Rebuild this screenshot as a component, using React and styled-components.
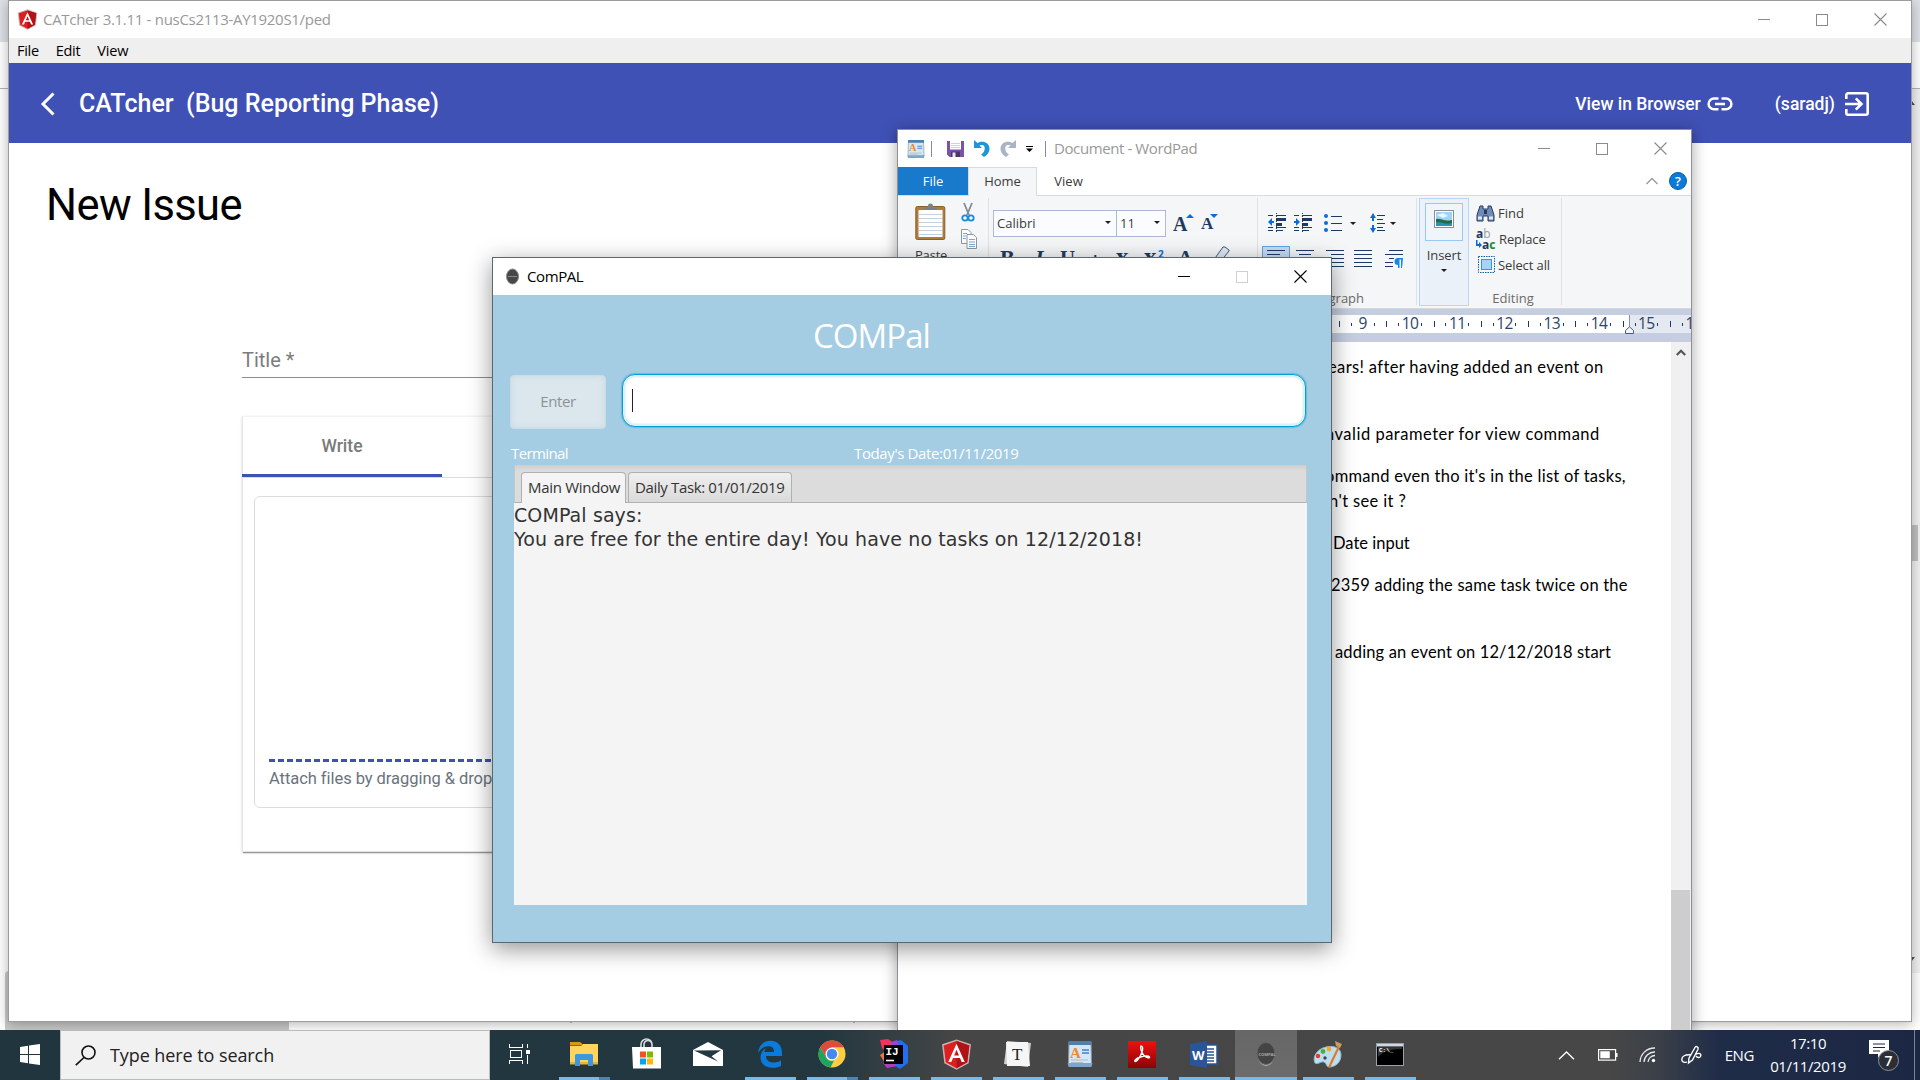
import React from "react";
import styled, { createGlobalStyle, css } from "styled-components";

const UI = `"Open Sans", "Noto Sans", sans-serif`;
const ROBOTO = `Roboto, "Open Sans", sans-serif`;

const GlobalStyle = createGlobalStyle`
  * { box-sizing: border-box; }
  html, body { margin: 0; padding: 0; overflow: hidden; }
  body { font-family: ${UI}; }
  svg { display: block; flex: none; overflow: visible; }
`;

/* ---------- shared ---------- */

const Desktop = styled.main`
  position: relative;
  width: 1920px;
  height: 1080px;
  overflow: hidden;
  background: #fdfdfd;
`;

const Label = styled.span`
  display: block;
  white-space: pre;
  font-family: ${(p) => p.$font || UI};
  font-size: ${(p) => p.$size || 15}px;
  line-height: ${(p) => p.$line || 20}px;
  font-weight: ${(p) => p.$weight || 400};
  letter-spacing: ${(p) => p.$track || 0}px;
  color: ${(p) => p.$color || "#000"};
`;

const Spacer = styled.div`
  flex: 1;
`;

const WindowFrame = styled.section`
  position: absolute;
  display: flex;
  flex-direction: column;
  background: #fff;
`;

const Caption = styled.header`
  display: flex;
  align-items: center;
  height: 37px;
  flex: none;
  background: #fff;
`;

const CaptionText = styled(Label)`
  padding-bottom: 2px;
`;

const CaptionButtons = styled.div`
  display: flex;
  align-items: center;
  gap: 46px;
  color: ${(p) => p.$color};
  padding-right: ${(p) => p.$right}px;
`;

const WindowButtons = ({ color, maxColor, right }) => (
  <CaptionButtons $color={color} $right={right}>
    <svg width="12" height="12" shapeRendering="crispEdges"><path d="M0 5.5H12" stroke="currentColor" /></svg>
    <svg width="12" height="12" shapeRendering="crispEdges"><rect x=".5" y=".5" width="11" height="11" fill="none" stroke={maxColor || color} /></svg>
    <svg width="13" height="13"><path d="M.5 .5L12.5 12.5M12.5 .5L.5 12.5" stroke="currentColor" strokeWidth="1.1" /></svg>
  </CaptionButtons>
);

/* ---------- browser window at the back ---------- */

const BackWindow = styled.div`
  display: flex;
  flex-direction: column;
  height: 1030px;
`;
const BackTabs = styled.div`
  height: 42px;
  background: #dee1e6;
`;
const BackBar = styled.div`
  height: 47px;
  background: #fff;
  border-bottom: 1px solid #b4b4b4;
`;
const BackBody = styled.div`
  display: flex;
  flex: 1;
  justify-content: flex-end;
  background: #fff;
`;
const BackScroll = styled.div`
  display: flex;
  flex-direction: column;
  align-items: flex-end;
  justify-content: space-between;
  width: 20px;
  height: 884px;
  padding: 11px 5px 11px 0;
  background: #f1f1f1;
`;
const BackThumb = styled.div`
  width: 17px;
  height: 36px;
  margin: 420px -3px auto;
  background: #c1c1c1;
`;
const BackDock = styled.div`
  display: flex;
  height: 59px;
  padding-left: 5px;
  margin-top: -59px;
`;
const BackPanel = styled.div`
  width: 284px;
  border-top-left-radius: 4px;
  background: #c9c9c9;
`;
const BackTicks = styled.div`
  width: 283px;
  border-right: 2px solid #c0c0c0;
  height: 52px;
`;

/* ---------- CATcher ---------- */

const CatcherFrame = styled(WindowFrame)`
  left: 8px;
  top: 0;
  width: 1904px;
  height: 1022px;
  border: 1px solid #9c9c9c;
  box-shadow: 0 2px 12px rgba(0, 0, 0, 0.3);
`;
const CatcherCaption = styled(Caption)`
  padding-left: 8px;
  gap: 5px;
`;
const MenuBar = styled.nav`
  display: flex;
  gap: 17px;
  height: 25px;
  padding: 3px 0 0 8px;
  background: #efefef;
`;
const Toolbar = styled.div`
  display: flex;
  align-items: center;
  height: 80px;
  padding: 2px 42px 0 31px;
  background: #3f51b5;
`;
const Page = styled.div`
  padding: 35px 0 0 37px;
`;
const Form = styled.div`
  width: 1400px;
  margin: 107px 0 0 196px;
`;
const TitleField = styled.div`
  display: flex;
  height: 37px;
  padding-top: 7px;
  border-bottom: 1px solid #8d8d8d;
`;
const EditorCard = styled.div`
  height: 436px;
  margin-top: 38px;
  border: 1px solid #e4e4e4;
  border-top-color: #f3f3f3;
  box-shadow: 0 2px 1px -1px rgba(0, 0, 0, 0.35), 0 1px 3px rgba(0, 0, 0, 0.14);
`;
const TabHeader = styled.div`
  display: flex;
  height: 61px;
  margin-left: -1px;
  border-bottom: 1px solid #dcdcdc;
`;
const EditorTab = styled.div`
  display: flex;
  align-items: center;
  justify-content: center;
  width: 200px;
  height: 60px;
  padding-top: 1px;
  border-bottom: 3px solid #3f51b5;
`;
const EditorBox = styled.div`
  display: flex;
  flex-direction: column;
  height: 312px;
  margin: 18px 11px 0;
  padding: 262px 14px 0;
  border: 1px solid #dcdcdc;
  border-radius: 6px;
`;
const DashLine = styled.div`
  height: 3px;
  margin-bottom: 7px;
  background: repeating-linear-gradient(90deg, #3f51b5 0 6px, transparent 6px 9px);
`;
const CatcherTitle = styled(Label)`
  margin-left: 23px;
`;
const LinkIcon = styled.svg`
  margin: 0 42px 0 6px;
`;
const ExitIcon = styled.svg`
  margin-left: 10px;
`;

const AngularShield = ({ w = 21, h = 21 }) => (
  <svg width={w} height={h} viewBox="0 0 30 30">
    <path d="M15 .5L29 5.2 26.8 23.5 15 29.8 3.2 23.5 1 5.2Z" fill="#c9b0b0" />
    <path d="M15 2L27.4 6.2 25.4 22.6 15 28.3 4.6 22.6 2.6 6.2Z" fill="#dd1f1f" />
    <path d="M15 2L27.4 6.2 25.4 22.6 15 28.3Z" fill="#b01217" />
    <path d="M15 4.5L7 22.3h3l1.6-4h6.8l1.6 4h3ZM15 10.3l2.4 5.6h-4.8Z" fill="#fff" fillRule="evenodd" />
  </svg>
);

const Catcher = () => (
  <CatcherFrame>
    <CatcherCaption>
      <AngularShield />
      <CaptionText $size={15} $track={-0.3} $color="#999">CATcher 3.1.11 - nusCs2113-AY1920S1/ped</CaptionText>
      <Spacer />
      <WindowButtons color="#8a8a8a" right={24} />
    </CatcherCaption>
    <MenuBar>
      <Label $size={14.5} $track={-0.3}>File</Label>
      <Label $size={14.5} $track={-0.3}>Edit</Label>
      <Label $size={14.5} $track={-0.2}>View</Label>
    </MenuBar>
    <Toolbar>
      <svg width="16" height="24"><path d="M13.5 1.5L3 12l10.500 10.500" fill="none" stroke="#fff" strokeWidth="3" /></svg>
      <CatcherTitle $font={ROBOTO} $size={25} $line={32} $weight={500} $color="#fff">{"CATcher  (Bug Reporting Phase)"}</CatcherTitle>
      <Spacer />
      <Label $font={ROBOTO} $size={17.5} $weight={500} $color="#fff">View in Browser</Label>
      <LinkIcon width="26" height="14" viewBox="0 0 26 14">
        <path d="M11.500 1.500H7a5.300 5.300 0 0 0 0 10.800h4.500M14.500 1.500H19a5.300 5.300 0 0 1 0 10.800h-4.500M8 7h10" fill="none" stroke="#fff" strokeWidth="2.500" />
      </LinkIcon>
      <Label $font={ROBOTO} $size={17.5} $weight={500} $color="#fff">(saradj)</Label>
      <ExitIcon width="24" height="24" viewBox="0 0 24 24">
        <path d="M1.300 7V3a1.700 1.700 0 0 1 1.700-1.700h18A1.700 1.700 0 0 1 22.700 3v18a1.700 1.700 0 0 1-1.700 1.700H3A1.700 1.700 0 0 1 1.300 21v-4M0 12h16M10.800 6.300L16.500 12l-5.700 5.700" fill="none" stroke="#fff" strokeWidth="2.600" />
      </ExitIcon>
    </Toolbar>
    <Page>
      <Label $font={ROBOTO} $size={43.5} $line={56} $track={-0.6}>New Issue</Label>
      <Form>
        <TitleField><Label $font={ROBOTO} $size={20} $line={24} $color="#7c7c7c">Title *</Label></TitleField>
        <EditorCard>
          <TabHeader>
            <EditorTab><Label $font={ROBOTO} $size={17.5} $weight={500} $color="#7a7a7a">Write</Label></EditorTab>
          </TabHeader>
          <EditorBox>
            <DashLine />
            <Label $font={ROBOTO} $size={16.5} $track={-0.05} $color="#6a737d">Attach files by dragging &amp; dropping or selecting them.</Label>
          </EditorBox>
        </EditorCard>
      </Form>
    </Page>
  </CatcherFrame>
);

/* ---------- WordPad ---------- */

const WordPadFrame = styled(WindowFrame)`
  left: 897px;
  top: 129px;
  width: 795px;
  height: 920px;
  border: 1px solid #8f8f97;
  box-shadow: 0 2px 14px rgba(0, 0, 0, 0.36);
`;
const QuickAccess = styled.div`
  display: flex;
  align-items: center;
  padding-left: 9px;
`;
const QuickSep = styled.div`
  width: 1px;
  height: 16px;
  margin: 0 ${(p) => p.$right}px 0 ${(p) => p.$left}px;
  background: #8c8c8c;
`;
const Gap = styled.div`
  width: ${(p) => p.$w}px;
  flex: none;
`;
const RibbonTabs = styled.div`
  display: flex;
  align-items: stretch;
  height: 29px;
  padding-right: 4px;
  border-bottom: 1px solid #d9dbdd;
`;
const RibbonTab = styled.div`
  display: flex;
  justify-content: center;
  width: ${(p) => p.$w}px;
  padding-top: 4px;
  ${(p) => p.$kind === "file" && css`background: #1979ca;`}
  ${(p) => p.$kind === "active" && css`
    height: 29px;
    background: #f5f6f7;
    border: 1px solid #dadbdc;
    border-bottom: 0;
    padding-top: 3px;
  `}
`;
const RibbonRight = styled.div`
  display: flex;
  align-items: center;
  gap: 11px;
  margin-left: auto;
`;
const Help = styled.div`
  display: flex;
  justify-content: center;
  width: 18px;
  height: 18px;
  border-radius: 50%;
  border: 1px solid #0a5ea6;
  background: #0b7ad8;
`;
const Ribbon = styled.div`
  display: flex;
  height: 113px;
  flex: none;
  padding: 2px 0 0;
  background: #f5f6f7;
  border-bottom: 1px solid #d5d8db;
`;
const Group = styled.div`
  display: flex;
  width: ${(p) => p.$w}px;
  height: 107px;
  border-right: 1px solid #e0e1e3;
`;
const Stack = styled.div`
  display: flex;
  flex-direction: column;
  padding: ${(p) => p.$pad || "0"};
`;
const Row = styled.div`
  display: flex;
  align-items: ${(p) => p.$align || "center"};
  height: ${(p) => p.$h}px;
  padding-left: ${(p) => p.$left || 0}px;
`;
const PasteLabel = styled(Label)`
  margin-top: 4px;
`;
const Combo = styled.div`
  display: flex;
  align-items: center;
  justify-content: space-between;
  width: ${(p) => p.$w}px;
  height: 27px;
  margin-right: -1px;
  padding: 0 5px 2px 3px;
  border: 1px solid #abbad0;
  background: #fafcff;
`;
const Serif = styled.span`
  font: bold ${(p) => p.$size}px/1 "Liberation Serif", serif;
  width: ${(p) => p.$w}px;
  font-style: ${(p) => (p.$italic ? "italic" : "normal")};
  text-decoration: ${(p) => (p.$under ? "underline" : "none")};
  color: #1e3a63;
  flex: none;
`;
const Struck = styled.span`
  width: 30px;
  margin-left: -4px;
  font: bold 13px/18px "Open Sans", sans-serif;
  letter-spacing: -0.5px;
  text-decoration: line-through;
  color: #1e3a63;
`;
const Selected = styled.div`
  display: flex;
  justify-content: center;
  width: 28px;
  height: 26px;
  padding-top: 3px;
  margin-right: 6px;
  border: 1px solid #62a2e4;
  background: #c6dcf2;
`;
const InsertButton = styled.div`
  display: flex;
  flex-direction: column;
  align-items: center;
  width: 50px;
  height: 108px;
  margin-left: 2px;
  padding-top: 4px;
  border: 1px solid #b9d7f5;
  background: #eaf1f8;
`;
const InsertPicture = styled.div`
  display: flex;
  align-items: center;
  justify-content: center;
  width: 38px;
  height: 38px;
  margin-bottom: 3px;
  padding-bottom: 6px;
  border: 1px solid #99c8f5;
  background: #f0f5fa;
`;
const EditCommand = styled.div`
  display: flex;
  align-items: center;
  gap: 3px;
  height: 26px;
`;
const GroupLabel = styled(Label)`
  margin: auto 0 -3px;
  text-align: center;
`;
const RulerBand = styled.div`
  display: flex;
  height: 33px;
  flex: none;
  padding: 6px 0 9px;
  background: #c4cee0;
`;
const RulerScale = styled.div`
  display: flex;
  flex: none;
  width: 793px;
  height: 18px;
  padding-left: 15.500px;
  overflow: hidden;
  background: linear-gradient(90deg, #fff 0 731px, #8293ad 731px 732px, #e4e8f0 732px);
`;
const RulerCell = styled.div`
  display: grid;
  grid-template-columns: 11.8px 1px 21.700px 1px 11.8px;
  align-items: center;
  flex: none;
`;
const Tick = styled.i`
  width: 1px;
  height: ${(p) => p.$h}px;
  background: #1e3a63;
`;
const RulerNumber = styled(Label)`
  display: flex;
  justify-content: center;
  margin-top: -2px;
`;
const Marker = styled.svg`
  position: relative;
  left: -66px;
  top: 11px;
`;
const DocRow = styled.div`
  display: flex;
  flex: 1;
  min-height: 0;
`;
const DocPage = styled.div`
  flex: 1;
  padding: 13px 0 0;
`;
const Paragraph = styled.div`
  margin-bottom: 17px;
  min-height: ${(p) => p.$lines * 25}px;
`;
const DocLine = styled(Label)`
  padding-left: ${(p) => p.$left}px;
`;
const DocScroll = styled.div`
  display: flex;
  flex-direction: column;
  align-items: center;
  width: 20px;
  padding-top: 7px;
  background: #f0f0f0;
`;
const DocThumb = styled.div`
  width: 19px;
  height: 200px;
  margin-top: 534px;
  margin-right: 1px;
  background: #cdcdcd;
`;

const Caret = ({ w = 6, h = 3 }) => (
  <svg width={w} height={h}><path d={`M0 0H${w}L${w / 2} ${h}Z`} fill="#1e1e1e" /></svg>
);
const Lines = ({ rows, w = 18 }) => (
  <svg width={w} height={rows.length * 4} shapeRendering="crispEdges">
    {rows.map(([a, b], i) => <path key={i} d={`M${a} ${i * 4 + 0.5}H${b}`} stroke="#1e3a63" strokeWidth="1" />)}
  </svg>
);
const IndentIcon = ({ flip }) => (
  <svg width="19" height="20" viewBox="0 0 19 20">
    <g stroke="#1e3a63" strokeWidth="1" shapeRendering="crispEdges">
      <path d="M1 2.500h5M9 2.500h10M1 14.500h5M9 14.500h10M1 17.500h5M9 17.500h7" />
      <path d="M9.500 0v20" strokeDasharray="1 1.500" />
    </g>
    <path d="M9 5h10v3H9zM9 10h6v3H9z" fill="#1e3a63" />
    <path d={flip ? "M1 8h2V5l4 4-4 4v-3H1z" : "M7 8H5V5L1 9l4 4v-3h2z"} fill="#0a6cd8" />
  </svg>
);
const WordPadIcon = ({ w, h }) => (
  <svg width={w} height={h} viewBox="0 0 26 28">
    <path d="M2 2h22l.5 22H1.500z" fill="#d5e6f5" stroke="#7c9cbc" />
    <path d="M1.500 1h23v4h-23z" fill="#4f7fab" />
    <path d="M.5 23h25l-1 4h-23z" fill="#7fa5c8" />
    <path d="M15 10h7M15 13h7" stroke="#4a7fc0" strokeWidth="1.300" />
    <path d="M4 20h17M4 22.500h12" stroke="#a9bccd" strokeWidth="1.200" />
    <text x="3" y="17.500" fontFamily="Liberation Serif, serif" fontWeight="bold" fontSize="15" fill="#f08a2c">A</text>
  </svg>
);

const paragraphs = [
  { lines: 2, text: [["ears! after having added an event on", 430, 0.36]] },
  { lines: 1, text: [["nvalid parameter for view command", 427, 0.5]] },
  { lines: 2, text: [["ommand even tho it's in the list of tasks,", 427, 0.27], ["n't see it ?", 431, 0.36]] },
  { lines: 1, text: [["Date input", 435, 0]] },
  { lines: 2, text: [["2359 adding the same task twice on the", 433, 0.2]] },
  { lines: 1, text: [["adding an event on 12/12/2018 start", 437, 0.15]] },
];

const DARK = "#3b3b3b";

const WordPad = () => (
  <WordPadFrame>
    <Caption>
      <QuickAccess>
        <WordPadIcon w={18} h={20} />
        <QuickSep $left={6} $right={15} />
        <svg width="17" height="16" viewBox="0 0 17 16">
          <path d="M0 0h17v16H2.500L0 13.500z" fill="#7a53a8" />
          <path d="M3 0h11v8.500H3z" fill="#fff" />
          <path d="M4 2.500h9M4 4.500h9M4 6.500h9" stroke="#d4cfde" />
          <path d="M4 10.500h9V16H4z" fill="#4a3768" /><path d="M5.500 11.500h3V16h-3z" fill="#e8e4f0" />
        </svg>
        <Gap $w={10} />
        <svg width="16" height="17" viewBox="0 0 16 17"><path d="M0 0v8h8L5.500 5.500C9 4 11.500 6 10.500 10c-.5 2-2 3.500-3.500 4.500L10 17c3-2 5.500-4.500 5.500-8.500C15.500 2 8 0 3.500 3z" fill="#1b96dc" /></svg>
        <Gap $w={10} />
        <svg width="16" height="17" viewBox="0 0 16 17"><path d="M16 0v8H8l2.500-2.500C7 4 4.500 6 5.500 10c.5 2 2 3.500 3.500 4.500L6 17C3 15 .5 12.500.5 8.500.5 2 8 0 12.500 3z" fill="#a9b4c6" /></svg>
        <Gap $w={10} />
        <svg width="7" height="6"><path d="M0 .5h7" stroke="#000" /><path d="M0 2.500h7L3.500 6z" /></svg>
        <QuickSep $left={12} $right={8} />
        <CaptionText $size={15} $color="#999" $track={-0.4}>Document - WordPad</CaptionText>
      </QuickAccess>
      <Spacer />
      <WindowButtons color="#8a8a8a" right={24} />
    </Caption>
    <RibbonTabs>
      <RibbonTab $w={70} $kind="file"><Label $size={13} $color="#fff">File</Label></RibbonTab>
      <RibbonTab $w={69} $kind="active"><Label $size={13} $color={DARK}>Home</Label></RibbonTab>
      <RibbonTab $w={63}><Label $size={13} $color={DARK}>View</Label></RibbonTab>
      <RibbonRight>
        <svg width="12" height="8"><path d="M.5 7L6 1.500 11.500 7" fill="none" stroke="#9a9a9a" strokeWidth="1.400" /></svg>
        <Help><Label $size={13} $line={16} $weight={600} $color="#fff">?</Label></Help>
      </RibbonRight>
    </RibbonTabs>
    <Ribbon>
      <Group $w={91}>
        <Stack $pad="6px 0 0 17px">
          <svg width="31" height="37" viewBox="0 0 31 37">
            <rect x=".8" y="2.500" width="29" height="33" rx="1.500" fill="#b07c3e" stroke="#8d6029" />
            <path d="M3.500 6h24v27h-24z" fill="#fff" />
            <path d="M4 10.500h23M4 14.500h23M4 18.500h23M4 22.500h23M4 26.500h23M4 30.500h23" stroke="#c4d2de" />
            <path d="M9 6c0-3 3-2 4-4a2.500 2.500 0 0 1 5 0c1 2 4 1 4 4z" fill="#7b8086" />
          </svg>
          <PasteLabel $size={13} $color={DARK} $track={-0.2}>Paste</PasteLabel>
        </Stack>
        <Stack $pad="5px 0 0 14px">
          <svg width="14" height="19" viewBox="0 0 14 19">
            <path d="M3 0l5 12M11 0L6 12" stroke="#7f8c9b" strokeWidth="1.800" />
            <circle cx="4" cy="15" r="2.700" fill="none" stroke="#1c8ad6" strokeWidth="1.800" />
            <circle cx="10" cy="15" r="2.700" fill="none" stroke="#1c8ad6" strokeWidth="1.800" />
          </svg>
          <svg width="17" height="27" viewBox="0 -7 17 27">
            <g fill="#fff" stroke="#8e969e"><path d="M.5.5H7l3 3v11H.5z" /><path d="M6 5.500h6.500l3 3v11H6z" /></g>
            <path d="M2 4.500h4M2 7h3M2 9.500h3M8 10.500h6M8 13h6M8 15.500h6M8 17.500h6" stroke="#7da7d4" />
          </svg>
        </Stack>
      </Group>
      <Group $w={269}>
        <Stack $pad="12px 0 0 4px">
          <Row $h={27}>
            <Combo $w={124}><Label $size={13} $color={DARK}>Calibri</Label><Caret /></Combo>
            <Combo $w={50}><Label $size={13} $color={DARK}>11</Label><Caret /></Combo>
            <Gap $w={8} />
            <Serif $size={20} $w={13}>A</Serif>
            <svg width="8" height="20"><path d="M0 4L4 0l4 4z" fill="#0a6cd8" /></svg>
            <Gap $w={7} />
            <Serif $size={17} $w={9}>A</Serif>
            <svg width="8" height="20"><path d="M0 0h8L4 4z" fill="#0a6cd8" /></svg>
          </Row>
          <Row $h={32} $left={7} $align="flex-end">
            <Serif $size={22} $w={35}>B</Serif>
            <Serif $size={22} $w={25} $italic>I</Serif>
            <Serif $size={21} $w={30} $under>U</Serif>
            <Struck>abc</Struck>
            <Serif $size={25} $w={28}>x</Serif>
            <Serif $size={25} $w={14}>x</Serif>
            <Stack $pad="0 14px 10px 0"><Label $size={10} $line={10} $weight={700} $color="#0a6cd8">2</Label></Stack>
            <Serif $size={21} $w={33}>A</Serif>
            <svg width="18" height="22"><path d="M2 14L12 0h2l4 3v1L7 18z" fill="#dfe8f4" stroke="#41597c" /></svg>
          </Row>
        </Stack>
      </Group>
      <Group $w={159}>
        <Stack $pad="15px 0 0 4px">
          <Row $h={20} $left={5}>
            <IndentIcon /><Gap $w={7} /><IndentIcon flip /><Gap $w={12} />
            <svg width="18" height="18" viewBox="0 0 18 18">
              <g fill="#0a6cd8"><circle cx="2" cy="2" r="2" /><circle cx="2" cy="9" r="2" /><circle cx="2" cy="16" r="2" /></g>
              <path d="M7 2.500h11M7 9.500h11M7 16.500h11" stroke="#1e3a63" shapeRendering="crispEdges" />
            </svg>
            <Gap $w={8} /><Caret /><Gap $w={14} />
            <svg width="15" height="20" viewBox="0 0 15 20">
              <path d="M0 5l3-5 3 5H4v3H2V5zM0 15l3 5 3-5H4v-3H2v3z" fill="#0a6cd8" />
              <path d="M7 2.500h8M7 6.500h6M7 10.500h8M7 14.500h6M7 17.500h8" stroke="#1e3a63" shapeRendering="crispEdges" />
            </svg>
            <Gap $w={5} /><Caret />
          </Row>
          <Row $h={39} $align="flex-end">
            <Selected><Lines rows={[[0, 18], [0, 13], [0, 18], [0, 13]]} /></Selected>
            <Row $h={22} $align="flex-start"><Lines rows={[[0, 18], [3, 15], [0, 18], [3, 15], [0, 18]]} /><Gap $w={12} />
              <Lines rows={[[0, 18], [5, 18], [0, 18], [5, 18], [0, 18]]} /><Gap $w={10} />
              <Lines rows={[[0, 18], [0, 18], [0, 18], [0, 18], [0, 18]]} /><Gap $w={13} />
              <svg width="18" height="19" viewBox="0 0 18 19">
                <path d="M4 .5h14M0 4.500h18M4 8.500h5M0 12.500h8M0 16.500h8" stroke="#1e3a63" shapeRendering="crispEdges" />
                <path d="M18 8h-5a3.500 3.500 0 0 0 0 7v3h1.500V9.500H16V18h1z" fill="#1c86e8" />
              </svg>
            </Row>
          </Row>
          <GroupLabel $size={13} $color="#6b6b6b">Paragraph</GroupLabel>
        </Stack>
      </Group>
      <InsertButton>
        <InsertPicture>
          <svg width="20" height="18" viewBox="0 0 20 18">
            <rect x=".5" y=".5" width="19" height="17" fill="#fff" stroke="#8d8d8d" />
            <path d="M2 2h16v14H2z" fill="#9fd3f5" /><path d="M2 9c5-1 8 3 16 1v6H2z" fill="#1f6b4a" /><path d="M2 12c6 0 10 3 16 1v3H2z" fill="#2c8fb4" /><path d="M3 5l6-2 5 3-5 2z" fill="#e8f6ff" />
          </svg>
        </InsertPicture>
        <Label $size={13} $line={22} $color={DARK} $track={-0.1}>Insert</Label>
        <Stack $pad="3px 0 0 0"><Caret /></Stack>
      </InsertButton>
      <Group $w={93}>
        <Stack $pad="2px 0 0 7px">
          <EditCommand>
            <svg width="19" height="17" viewBox="0 0 19 17">
              <path d="M4 1h3v3h5V1h3l3 9v6h-6v-5H7v5H1v-6z" fill="#6f8cb8" stroke="#263a63" />
              <path d="M2 11.500h4v3H2zM13 11.500h4v3h-4z" fill="#dfe8f6" /><path d="M8 5h3v4H8z" fill="#263a63" />
            </svg>
            <Label $size={13} $color={DARK}>Find</Label>
          </EditCommand>
          <EditCommand>
            <svg width="20" height="20" viewBox="0 0 20 20">
              <text x="0" y="9" fontFamily="Open Sans, sans-serif" fontWeight="700" fontSize="12" fill="#1e3a63">a<tspan fontWeight="400" fill="#9a9a9a">b</tspan></text>
              <text x="6" y="19.500" fontFamily="Open Sans, sans-serif" fontWeight="700" fontSize="12" fill="#1e3a63">a<tspan fill="#1a8a2a">c</tspan></text>
              <path d="M0 11v6h3v2l3-3-3-3v2H1.500v-4z" fill="#0a6cd8" />
            </svg>
            <Label $size={13} $color={DARK} $track={-0.1}>Replace</Label>
          </EditCommand>
          <EditCommand>
            <svg width="19" height="18" viewBox="0 0 19 18">
              <rect x="2.500" y=".5" width="16" height="16" fill="none" stroke="#0b63b0" strokeDasharray="1.500 1" />
              <rect x="5.500" y="3.500" width="10" height="10" fill="#a8d2fb" stroke="#3a93e8" />
            </svg>
            <Label $size={13} $color={DARK} $track={-0.1}>Select all</Label>
          </EditCommand>
          <GroupLabel $size={13} $color="#6b6b6b">Editing</GroupLabel>
        </Stack>
      </Group>
    </Ribbon>
    <RulerBand>
      <RulerScale>
        {Array.from({ length: 17 }, (_, n) => (
          <RulerCell key={n}>
            <Tick $h={6} /><Tick $h={3} />
            <RulerNumber $size={15.5} $line={18} $color="#2b4468" $track={-0.6}>{n}</RulerNumber>
            <Tick $h={3} />
          </RulerCell>
        ))}
      </RulerScale>
      <Marker width="9" height="8" viewBox="0 0 9 8"><path d="M.5 7.500V4.500L4.500.8l4 3.700v3z" fill="#f3f5f9" stroke="#4a5f80" /></Marker>
    </RulerBand>
    <DocRow>
      <DocPage>
        {paragraphs.map((p, i) => (
          <Paragraph key={i} $lines={p.lines}>
            {p.text.map(([text, left, track]) => (
              <DocLine key={text} $font={`Lato, "Open Sans", sans-serif`} $size={16.5} $line={25} $left={left} $track={track}>{text}</DocLine>
            ))}
          </Paragraph>
        ))}
      </DocPage>
      <DocScroll>
        <svg width="10" height="7"><path d="M.8 6L5 1.800 9.200 6" fill="none" stroke="#555" strokeWidth="2.200" /></svg>
        <DocThumb />
      </DocScroll>
    </DocRow>
  </WordPadFrame>
);

/* ---------- ComPAL ---------- */

const CompalFrame = styled(WindowFrame)`
  left: 492px;
  top: 257px;
  width: 840px;
  height: 686px;
  border: 1px solid #5e676c;
  background: #a4cce3;
  box-shadow: 0 6px 22px rgba(0, 0, 0, 0.42);
`;
const CompalCaption = styled(Caption)`
  padding-left: 13px;
  gap: 8px;
`;
const CompalBody = styled.div`
  display: flex;
  flex-direction: column;
  padding: 20px 24px 0 17px;
`;
const CompalTitle = styled(Label)`
  padding-left: 303px;
`;
const EntryRow = styled.div`
  display: flex;
  gap: 16px;
  margin-top: 18px;
`;
const EnterButton = styled.div`
  display: flex;
  align-items: center;
  justify-content: center;
  width: 96px;
  height: 54px;
  padding-bottom: 3px;
  border: 1px solid #c9dde8;
  border-radius: 4px;
  background: #dce7ed;
  box-shadow: inset 0 0 6px rgba(190, 212, 224, 0.7);
`;
const EntryField = styled.div`
  display: flex;
  align-items: center;
  width: 684px;
  height: 53px;
  margin-top: -1px;
  padding: 0 0 1px 9px;
  border: 1.500px solid #039ed3;
  border-radius: 13px;
  background: #fff;
  box-shadow: inset 0 0 0 2.500px #dbf0f8, 0 0 1px 1px rgba(3, 158, 211, 0.35);
`;
const TextCaret = styled.i`
  width: 1px;
  height: 23px;
  background: #222;
`;
const InfoRow = styled.div`
  display: flex;
  height: 36px;
  padding-top: 14px;
`;
const TerminalLabel = styled(Label)`
  width: 344px;
  padding-left: 1px;
`;
const TabStrip = styled.div`
  display: flex;
  align-items: flex-end;
  gap: 2px;
  width: 793px;
  height: 38px;
  margin-left: 4px;
  padding-left: 6px;
  border-bottom: 1px solid #b2b2b2;
  border-left: 1px solid #c6c6c6;
  border-right: 1px solid #c6c6c6;
  background: linear-gradient(#cfcfcf, #dcdcdc 6px);
`;
const OutputTab = styled.div`
  width: ${(p) => p.$w}px;
  height: ${(p) => (p.$active ? 31 : 30)}px;
  margin-bottom: ${(p) => (p.$active ? -1 : 0)}px;
  padding: 4px 0 0 6px;
  border: 1px solid #b0b0b0;
  border-bottom: 0;
  border-radius: 4px 4px 0 0;
  background: ${(p) => (p.$active ? "#f4f4f4" : "linear-gradient(#efefef, #dadada)")};
`;
const Output = styled.div`
  width: 793px;
  height: 402px;
  margin-left: 4px;
  background: #f4f4f4;
`;

const OUTPUT_FONT = `"DejaVu Sans", sans-serif`;

const Compal = () => (
  <CompalFrame>
    <CompalCaption>
      <svg width="13" height="17" viewBox="0 0 13 17"><ellipse cx="6.500" cy="8.500" rx="6" ry="7.500" fill="#474747" stroke="#8a8a8a" /><path d="M2 8.500h9" stroke="#888" /></svg>
      <CaptionText $size={15} $track={-0.4}>ComPAL</CaptionText>
      <Spacer />
      <WindowButtons color="#000" maxColor="#cfcfcf" right={24} />
    </CompalCaption>
    <CompalBody>
      <CompalTitle $size={33} $line={42} $color="#fff" $track={-0.95}>COMPal</CompalTitle>
      <EntryRow>
        <EnterButton><Label $size={15} $color="#8b9296" $track={-0.4}>Enter</Label></EnterButton>
        <EntryField><TextCaret /></EntryField>
      </EntryRow>
      <InfoRow>
        <TerminalLabel $size={15} $color="#fff" $track={-0.6}>Terminal</TerminalLabel>
        <Label $size={15} $color="#fff" $track={-0.38}>Today's Date:01/11/2019</Label>
      </InfoRow>
      <TabStrip>
        <OutputTab $w={105} $active><Label $size={15} $color="#333" $track={-0.3}>Main Window</Label></OutputTab>
        <OutputTab $w={164}><Label $size={15} $color="#333" $track={-0.36}>Daily Task: 01/01/2019</Label></OutputTab>
      </TabStrip>
      <Output>
        <Label $font={OUTPUT_FONT} $size={19} $line={24} $color="#333" $track={0.1}>COMPal says:</Label>
        <Label $font={OUTPUT_FONT} $size={19} $line={24} $color="#333" $track={0.1}>You are free for the entire day! You have no tasks on 12/12/2018!</Label>
      </Output>
    </CompalBody>
  </CompalFrame>
);

/* ---------- taskbar ---------- */

const Bar = styled.footer`
  position: absolute;
  left: 0;
  top: 1030px;
  display: flex;
  width: 1920px;
  height: 50px;
  background: linear-gradient(90deg, #20353e 0, #22373f 820px, #464646 960px, #474747 1610px, #3a3f48 1660px, #1f2c48 1720px, #1b2743 1920px);
`;
const Start = styled.div`
  display: flex;
  align-items: center;
  justify-content: center;
  width: 60px;
  padding-bottom: 1px;
`;
const Search = styled.div`
  display: flex;
  align-items: center;
  gap: 14px;
  width: 430px;
  padding-left: 14px;
  border: 1px solid #b9bcbd;
  background: #f1f1f1;
`;
const TaskView = styled.div`
  display: flex;
  align-items: center;
  padding: 0 0 2px 19px;
  width: 63px;
`;
const TaskItem = styled.div`
  display: flex;
  flex-direction: column;
  align-items: center;
  justify-content: center;
  width: 62px;
  padding: 0 0 2px;
  position: relative;
  ${(p) => p.$focus && css`background: linear-gradient(#676767, #6c6c6c);`}
  &::after {
    content: "";
    position: absolute;
    left: ${(p) => (p.$focus ? 0 : 6)}px;
    bottom: 0;
    width: ${(p) => (p.$focus ? 62 : 51)}px;
    height: 3px;
    background: ${(p) => (p.$stacked ? "linear-gradient(90deg, #76b9ed 0 40px, #4d83b3 40px)" : "#76b9ed")};
    display: ${(p) => (p.$idle ? "none" : "block")};
  }
`;
const Tray = styled.div`
  display: flex;
  align-items: center;
  margin-left: auto;
  height: 50px;
`;
const Clock = styled.div`
  display: flex;
  flex-direction: column;
  align-items: center;
  width: 92px;
  padding-bottom: 1px;
`;
const Notify = styled.div`
  position: relative;
  width: 32px;
  height: 34px;
  margin-left: 15px;
`;
const Badge = styled.div`
  position: absolute;
  left: 9px;
  top: 12px;
  display: flex;
  justify-content: center;
  width: 21px;
  height: 21px;
  border: 1px solid #8c9199;
  border-radius: 50%;
  background: #2b2e35;
`;
const ShowDesktop = styled.div`
  width: 6px;
  height: 50px;
  margin-left: 13px;
  border-left: 1px solid #7b8494;
`;

const items = [
  { key: "files", stacked: true, icon: (
    <svg width="28" height="28" viewBox="0 0 28 28">
      <path d="M0 4V2.500h11L13 5z" fill="#e0a000" /><path d="M0 2h10l2.500 3.500H0z" fill="#d99a08" />
      <path d="M0 6h11l2-2h15v20H0z" fill="#ffd45e" /><path d="M0 22h28v2.500H0z" fill="#e9b33a" />
      <path d="M5 26V15.500a1.500 1.500 0 0 1 1.500-1.500h15a1.500 1.500 0 0 1 1.500 1.500V26h-5v-6h-8v6z" fill="#3d97e0" />
    </svg>) },
  { key: "store", idle: true, icon: (
    <svg width="29" height="30" viewBox="0 0 29 30">
      <path d="M9 9V5.500a5.500 5.500 0 0 1 11 0V9M12 9V6a4 4 0 0 1 8-1" fill="none" stroke="#d9dedf" strokeWidth="1.600" />
      <path d="M0 8h29v21.500H1z" fill="#fff" />
      <path d="M8 12.500h6v6H8z" fill="#f25022" /><path d="M15 12.500h6v6h-6z" fill="#7fba00" /><path d="M8 19.500h6v6H8z" fill="#00a4ef" /><path d="M15 19.500h6v6h-6z" fill="#ffb900" />
    </svg>) },
  { key: "mail", idle: true, icon: (
    <svg width="30" height="24" viewBox="0 0 30 24"><path d="M0 8L15 0l15 8v16H0z" fill="#fff" /><path d="M1 8.500l27-.3-9.500 6 6.500 5.300z" fill="#22373f" /></svg>) },
  { key: "edge", icon: (
    <svg width="26" height="28" viewBox="0 0 26 28"><path d="M1 13C2 5 7 .8 13.500.8 21 .8 25 6 25 13v3H9c.3 5 4 6.500 8 6.500 3 0 5-.8 7-2v5.500c-2 1.200-5 1.800-8 1.800C8 27.800 3.500 23.500 3.500 17.500c0-4 2-7.500 5.500-9.300-1 1.300-1.500 2.600-1.700 3.800H17c0-3.800-2-5.800-5.500-5.800C7 6.200 3.500 8.800 1 13z" fill="#0b7ad8" /></svg>) },
  { key: "chrome", stacked: true, icon: (
    <svg width="28" height="28" viewBox="0 0 28 28">
      <circle cx="14" cy="14" r="13.500" fill="#ffcd41" />
      <path d="M2.300 7.200A13.500 13.500 0 0 1 25.700 7.200H14L8.100 17.400z" fill="#de4b3c" />
      <path d="M2.300 7.200L8.100 17.400A6.800 6.800 0 0 0 16 20.500L12.500 27.400A13.500 13.500 0 0 1 2.300 7.200z" fill="#1da462" />
      <circle cx="14" cy="14" r="6.500" fill="#fff" /><circle cx="14" cy="14" r="5.200" fill="#4688f1" />
    </svg>) },
  { key: "idea", icon: (
    <svg width="30" height="30" viewBox="0 0 30 30">
      <path d="M1 1l8-1 6 4-2 14L3 9z" fill="#f2335f" /><path d="M1 16l6-4 6 10-4 7z" fill="#f2753a" /><path d="M14 3l8-2 7 6v17l-8 6-8-5z" fill="#1f6fef" /><path d="M4 24l6-6 8 9-10 2z" fill="#b13cc4" /><path d="M12 3l6-2 3 8-9 4z" fill="#9a45d0" />
      <path d="M5 6h19v19H5z" fill="#000" /><path d="M7 21.500h8" stroke="#fff" strokeWidth="1.600" />
      <text x="6.500" y="15.500" fontFamily="Liberation Mono, monospace" fontWeight="bold" fontSize="11" fill="#fff">IJ</text>
    </svg>) },
  { key: "angular", icon: <AngularShield w={31} h={31} /> },
  { key: "typora", icon: (
    <svg width="28" height="28" viewBox="0 0 28 28">
      <path d="M3 1l24 2-3 24L0 24z" fill="#cfcfcf" /><path d="M2 2l22 0 2 24-23 0z" fill="#f6f6f6" />
      <text x="8" y="20" fontFamily="Liberation Serif, serif" fontSize="17" fill="#222">T</text>
    </svg>) },
  { key: "wordpad", icon: <WordPadIcon w={26} h={28} /> },
  { key: "acrobat", icon: (
    <svg width="28" height="27" viewBox="0 0 28 27"><defs><linearGradient id="pdf" x2="0" y2="1"><stop stopColor="#f01010" /><stop offset="1" stopColor="#8a0505" /></linearGradient></defs>
      <path d="M0 0h28v27H0z" fill="url(#pdf)" /><path d="M13 5c2 0 2 3 1 6s-4 9-6.500 9.500c-2 0 0-3 5-4.500s8-1.500 9 0c.5 1.500-3 1-5.500-1.500S12 6 13 5z" fill="none" stroke="#fff" strokeWidth="1.400" />
    </svg>) },
  { key: "word", icon: (
    <svg width="28" height="27" viewBox="0 0 28 27"><path d="M15 4h12v19H15z" fill="#fff" stroke="#2a5699" strokeWidth="1.500" /><path d="M16 8h8M16 11h8M16 14h8M16 17h8M16 20h8" stroke="#2a5699" strokeWidth="1.300" /><path d="M0 3L17 0v27L0 24z" fill="#2a5699" />
      <text x="2" y="18.500" fontFamily="Open Sans, sans-serif" fontWeight="700" fontSize="13" fill="#fff">W</text></svg>) },
  { key: "compal", focus: true, icon: (
    <svg width="20" height="26" viewBox="0 0 20 26"><ellipse cx="10" cy="14" rx="8.500" ry="11" fill="#b5b5b5" /><ellipse cx="10" cy="12.500" rx="9" ry="11" fill="#444" stroke="#666" />
      <text x="2.500" y="15" fontFamily="Open Sans, sans-serif" fontWeight="700" fontSize="4" fill="#aaa">COMPAL</text></svg>) },
  { key: "paint", icon: (
    <svg width="30" height="29" viewBox="0 0 30 29"><path d="M13 7c8-2 15 1 15 8s-5 12-12 12c-3 0-2-4-5-5s-6 3-9 1c-3-6 2-14 11-16z" fill="#bcdff0" stroke="#8fb8cc" /><circle cx="5" cy="16" r="2.200" fill="#e23b2e" /><circle cx="10" cy="11.500" r="2.400" fill="#4eae3a" /><circle cx="16" cy="9" r="2.400" fill="#f5a623" /><circle cx="12" cy="18" r="1.700" fill="#3d4a55" />
      <path d="M15 27L25 6l2 1L17 28z" fill="#e07a2a" /><path d="M22 1l7 3-2 4-4-2z" fill="#c89a5e" /></svg>) },
  { key: "cmd", icon: (
    <svg width="28" height="23" viewBox="0 0 28 23"><rect x=".5" y=".5" width="27" height="22" fill="#000" stroke="#9aa0a5" /><path d="M1 1h26v2.500H1z" fill="#cdd8e0" /><path d="M2 14C6 9 14 6 26 6V4H2z" fill="#333" />
      <text x="3" y="9" fontFamily="Liberation Mono, monospace" fontWeight="bold" fontSize="6" fill="#fff">C:\_</text></svg>) },
];

const Taskbar = () => (
  <Bar>
    <Start>
      <svg width="20" height="21" viewBox="0 0 20 21"><path d="M0 3l8-1.200V10H0zM9 1.600L20 0v10H9zM0 11h8v8.200L0 18zM9 11h11v10L9 19.400z" fill="#fff" /></svg>
    </Start>
    <Search>
      <svg width="21" height="21" viewBox="0 0 21 21"><circle cx="13.500" cy="7.500" r="6.500" fill="none" stroke="#111" strokeWidth="1.600" /><path d="M9 12.500L.8 20.200" stroke="#111" strokeWidth="1.700" /></svg>
      <Label $size={18} $line={24} $color="#222" $track={-0.08}>Type here to search</Label>
    </Search>
    <TaskView>
      <svg width="22" height="20" viewBox="0 0 22 20" shapeRendering="crispEdges">
        <path d="M.5 0v3.500h13V0M.5 20v-3.500h13V20M1.500 6.500h11v7h-11z" fill="none" stroke="#fff" /><path d="M18.500 0v4M18.500 11v9" stroke="#fff" /><path d="M17 6h3.500v3.500H17z" fill="#fff" />
      </svg>
    </TaskView>
    {items.map((it) => (
      <TaskItem key={it.key} $stacked={it.stacked} $idle={it.idle} $focus={it.focus}>{it.icon}</TaskItem>
    ))}
    <Tray>
      <svg width="17" height="9"><path d="M1 8.300L8.500 1 16 8.300" fill="none" stroke="#fff" strokeWidth="1.300" /></svg>
      <Gap $w={23} />
      <svg width="20" height="12"><rect x=".6" y=".6" width="17" height="10.500" fill="none" stroke="#fff" strokeWidth="1.200" /><path d="M2.300 2.300h9.500v7H2.300zM18 4h1.500v4H18z" fill="#fff" /></svg>
      <Gap $w={21} />
      <svg width="17" height="16" viewBox="0 0 17 16"><g fill="none" stroke="#e6e8ea" strokeWidth="1.300"><path d="M1 15A14.500 14.500 0 0 1 16 1" /><path d="M5 15A10.500 10.500 0 0 1 16 5" /><path d="M9 15a7 7 0 0 1 7-6.500" /></g><circle cx="14.500" cy="13.500" r="1.700" fill="#fff" /></svg>
      <Gap $w={25} />
      <svg width="21" height="20" viewBox="0 0 21 20"><path d="M8 13L14 2.500c1-1.800 4-.5 3 1.700L11.500 15 7.500 18zM10.500 10C4 9 .8 11.500.8 14.500c0 2.500 3 3.500 5 2.500M14.500 9.500c4-2.500 6-.5 5 2-.8 1.500-3 1.500-4.500-.5" fill="none" stroke="#fff" strokeWidth="1.400" /></svg>
      <Gap $w={23} />
      <Label $size={15} $color="#fff" $track={-0.4}>ENG</Label>
      <Gap $w={8} />
      <Clock>
        <Label $size={15} $line={23} $color="#fff" $track={-0.4}>17:10</Label>
        <Label $size={15} $line={23} $color="#fff" $track={-0.4}>01/11/2019</Label>
      </Clock>
      <Notify>
        <svg width="21" height="22" viewBox="0 0 21 22"><path d="M0 2h20v14H12l-3 4v-4H0z" fill="#fff" /><path d="M4 6h12M4 9.500h12M4 13h7" stroke="#1b2743" strokeWidth="1.200" /></svg>
        <Badge><Label $size={14} $line={19} $weight={600} $color="#fff">7</Label></Badge>
      </Notify>
      <ShowDesktop />
    </Tray>
  </Bar>
);

export default function App() {
  return (
    <Desktop>
      <GlobalStyle />
      <BackWindow>
        <BackTabs />
        <BackBar />
        <BackBody>
          <BackScroll>
            <svg width="8" height="5"><path d="M0 5L4 0l4 5z" fill="#505050" /></svg>
            <BackThumb />
            <svg width="8" height="5"><path d="M0 0h8L4 5z" fill="#505050" /></svg>
          </BackScroll>
        </BackBody>
        <BackDock><BackPanel /><BackTicks /><BackTicks /></BackDock>
      </BackWindow>
      <Catcher />
      <WordPad />
      <Compal />
      <Taskbar />
    </Desktop>
  );
}
